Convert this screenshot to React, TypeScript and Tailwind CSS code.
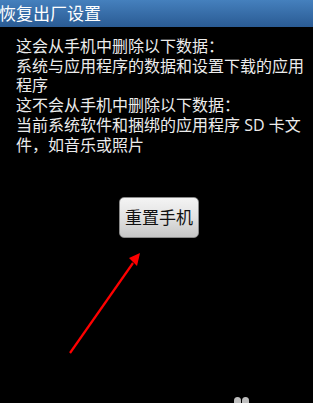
import React from "react";

export default function App() {
  const font = { fontFamily: '"Open Sans", "Noto Sans CJK SC", sans-serif' };
  return (
    <div className="relative w-[313px] h-[403px] bg-black overflow-hidden" style={font}>
      <div className="h-[27px] bg-gradient-to-b from-[#4580bd] to-[#2a5b94] flex items-center">
        <span className="text-[17px] leading-none text-white ml-[-1px] tracking-[0px]">恢复出厂设置</span>
      </div>
      <div className="pl-[16px] pr-[8px] pt-[10px] text-[16px] leading-[19.7px] text-[#ececec]">
        <div>这会从手机中删除以下数据：</div>
        <div>系统与应用程序的数据和设置下载的应用程序</div>
        <div>这不会从手机中删除以下数据：</div>
        <div>当前系统软件和捆绑的应用程序 SD 卡文件，如音乐或照片</div>
      </div>
      <div className="flex justify-center pl-[5px] mt-[42px]">
        <button className="w-[80px] h-[41px] rounded-[5px] border border-[#8a8a8a] bg-gradient-to-b from-[#f4f4f4] via-[#e2e2e2] to-[#c6c6c6] text-[17px] text-[#111]">
          重置手机
        </button>
      </div>
      <svg className="absolute left-0 top-0" width="313" height="403" viewBox="0 0 313 403">
        <line x1="70" y1="353" x2="133" y2="263" stroke="#ff0000" strokeWidth="2.2" />
        <polygon points="140,253 129,258 137,266" fill="#ff0000" />
      </svg>
      <div className="absolute left-[234px] top-[397px] flex gap-[1px]">
        <div className="w-[7px] h-[9px] rounded-full bg-[#bdbdbd]" />
        <div className="w-[7px] h-[9px] rounded-full bg-[#bdbdbd]" />
      </div>
    </div>
  );
}
